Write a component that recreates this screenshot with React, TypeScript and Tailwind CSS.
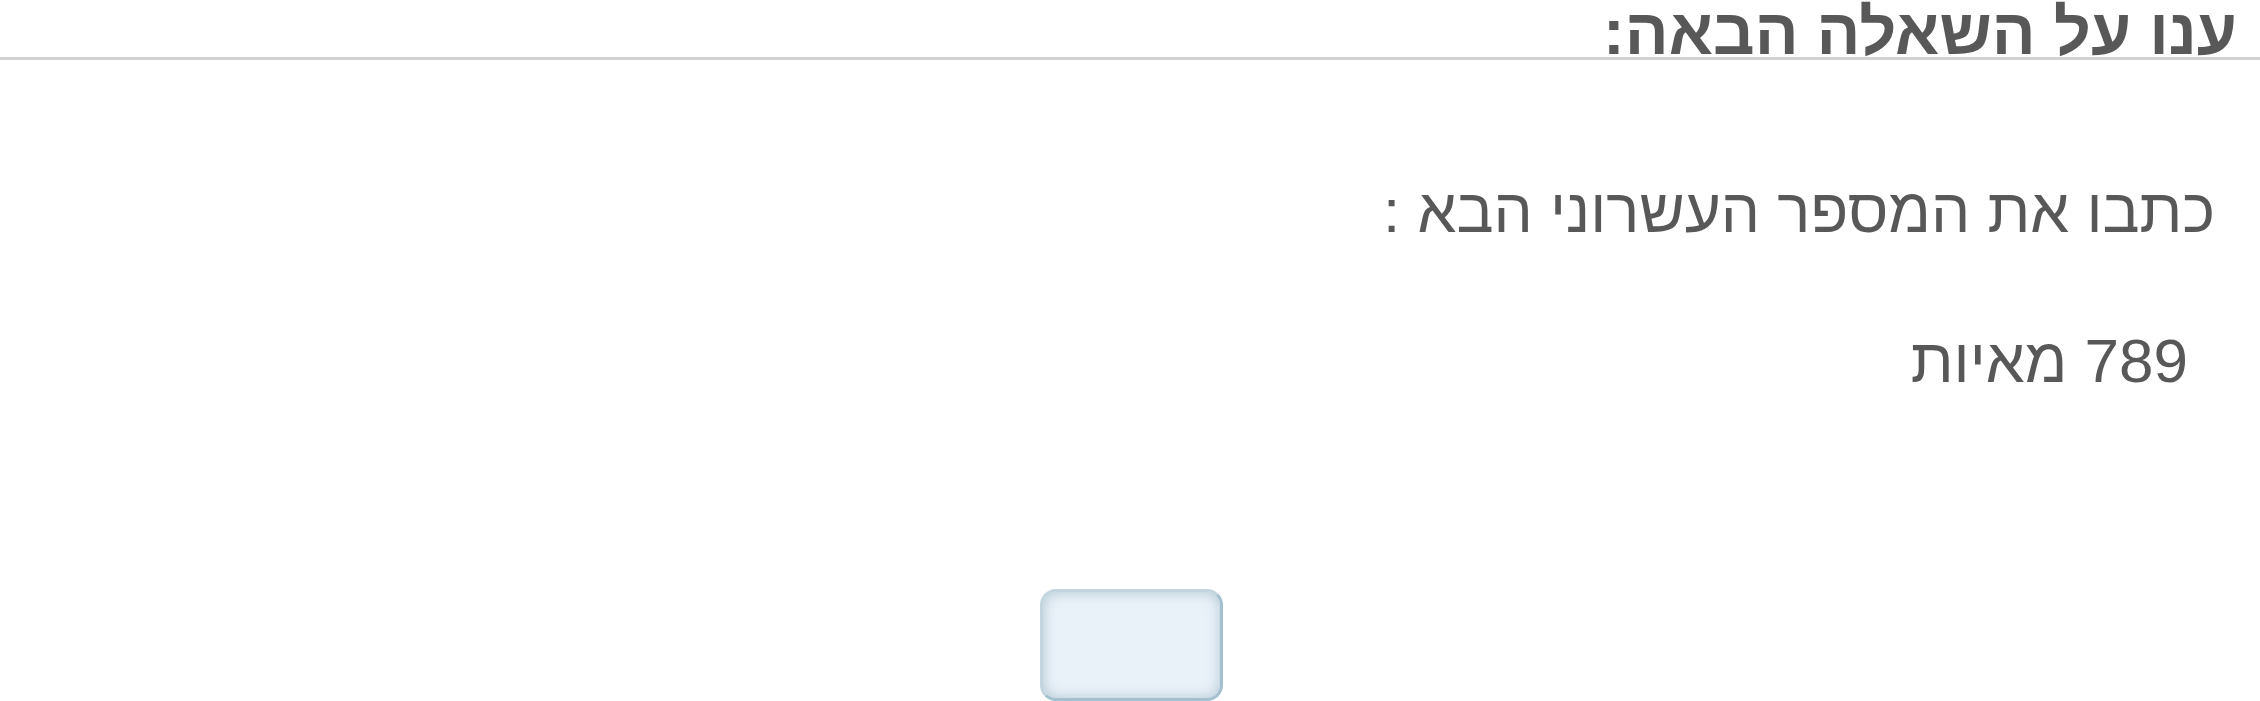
export default function App() {
  return (
    <div
      dir="rtl"
      className="w-full h-[701px] bg-white flex flex-col overflow-hidden text-[#585858]"
      style={{ fontFamily: '"Liberation Sans", Arial, sans-serif' }}
    >
      <div className="h-[57px] overflow-hidden pr-[23px]">
        <h1 className="-mt-[1px] text-[65px] font-bold leading-none">ענו על השאלה הבאה:</h1>
      </div>
      <div className="h-[3px] bg-[#d2d2d2]" />
      <div className="flex flex-col pr-[45px]">
        <p className="mt-[120px] text-[62px] leading-none">כתבו את המספר העשרוני הבא :</p>
        <p className="mt-[88px] mr-[27px] text-[62px] leading-none">789 מאיות</p>
      </div>
      <div className="flex-1" />
      <div className="flex justify-center pl-[3px]">
        <div className="w-[183px] h-[112px] rounded-[16px] border-[3px] border-[#a3c0cf] border-t-[#c3d5df] border-l-[#c3d5df] bg-[#eaf2f9] shadow-[inset_0_0_14px_rgba(130,160,175,0.55)]" />
      </div>
    </div>
  );
}
